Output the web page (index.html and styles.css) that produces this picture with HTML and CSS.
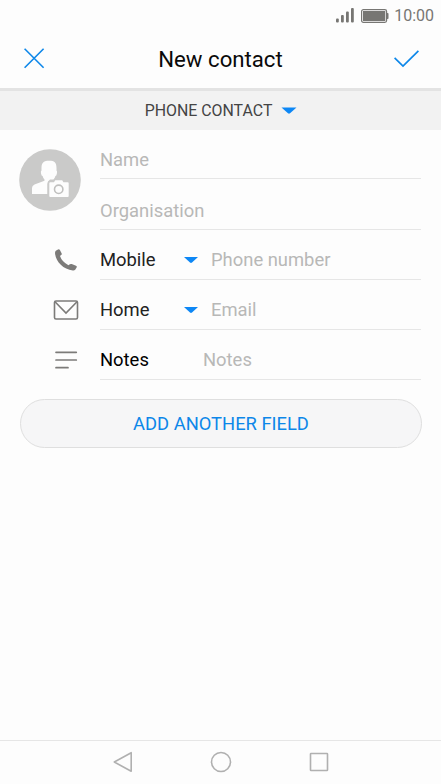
FILE: index.html
```html
<!DOCTYPE html>
<html lang="en">
<head>
<meta charset="utf-8">
<title>New contact</title>
<link rel="stylesheet" href="styles.css">
</head>
<body>
<div class="screen">
  <div class="status">
    <svg class="signal" width="20" height="16" viewBox="0 0 20 16" fill="#777673"><rect x="0" y="10.500" width="2.800" height="4" rx="1"/><rect x="5" y="7" width="2.800" height="7.500" rx="1"/><rect x="10" y="3.500" width="2.800" height="11" rx="1"/><rect x="15" y="0" width="2.800" height="14.500" rx="1"/></svg>
    <svg class="battery" width="28" height="14" viewBox="0 0 28 14"><rect x=".6" y=".6" width="25" height="12.8" rx="1.8" fill="none" stroke="#777673" stroke-width="1.2"/><rect x="2" y="2" width="22.3" height="10" fill="#777673"/><rect x="25.7" y="4" width="1.8" height="6" rx=".7" fill="#777673"/></svg>
    <span class="clock">10:00</span>
  </div>
  <header class="header">
    <svg width="22" height="22" viewBox="0 0 22 22"><path d="M1.600 .8 20.600 19.800M20.600 .8 1.600 19.800" stroke="#0d87e9" stroke-width="1.6" fill="none"/></svg>
    <h1 class="title">New contact</h1>
    <svg width="26" height="18" viewBox="0 0 26 18"><path d="M.6 7.800 9 16 24.400 .8" stroke="#0d87e9" stroke-width="1.7" fill="none"/></svg>
  </header>
  <div class="account">
    <span class="account-name">PHONE CONTACT</span>
    <svg width="16" height="8" viewBox="0 0 16 8"><path d="M.5 .5h15L9 6.300q-1 .7-2 0z" fill="#0d87f5"/></svg>
  </div>
  <main class="form">
    <div class="identity">
      <svg class="avatar" width="62" height="62" viewBox="0 0 62 62">
        <circle cx="31" cy="31" r="30.8" fill="#cacac9"/>
        <path d="M22.500 19C22.500 13.500 25 11.800 30.200 11.800S37.500 13.500 37.500 19V21.500Q38.400 22 37.900 24.500T36.400 27Q35.700 29.500 34.500 30.500H31Q28.300 32 28.300 35V45H13V39Q13 36.500 15.500 35.500L25.500 31.800V30.500Q24.200 29.500 23.600 27 22.500 27 22 24.500T22.500 21.500z" fill="#fdfdfd"/>
        <path d="M31 33.300h4l1.200-2h7l1.200 2h4.300q1 0 1 1v12.700q0 1-1 1H31.300q-1 0-1-1V34.300q0-1 1-1z" fill="#fdfdfd" stroke="#cacac9" stroke-width="3" paint-order="stroke"/>
        <circle cx="39.700" cy="40.300" r="4.200" fill="none" stroke="#c0c0bf" stroke-width="1.600"/>
      </svg>
      <div class="lines">
        <div class="line name"><span class="hint">Name</span></div>
        <div class="line"><span class="hint">Organisation</span></div>
      </div>
    </div>
    <div class="field">
      <svg class="icon" width="26" height="26" viewBox="0 0 26 26"><path d="M2.800 3.800 5 2.400q1.200-.6 1.900.5l1.700 3.300q.5 1.300-.5 1.900L7 9q1.900 5.800 8.500 9.200l1.300-.9q.9-.6 1.900-.3l4.300 1.800q1.300.7.6 1.700l-1.400 2.200q-.8 1-2.300.8C10 22.300 2.600 14.500 2 6q0-1.400.8-2.200z" fill="#7c7b79"/></svg>
      <div class="line"><span class="label">Mobile</span><svg class="caret" width="14" height="8" viewBox="0 0 14 8"><path d="M0 1h14L8 6.600q-1 .7-2 0z" fill="#0d87f5"/></svg><span class="hint">Phone number</span></div>
    </div>
    <div class="field">
      <svg class="icon" width="26" height="26" viewBox="0 0 26 26" fill="none" stroke="#7c7b79" stroke-width="1.600"><rect x="1.500" y="4" width="23" height="18" rx="1.500"/><path d="M2 4.800 13 16 24 4.800"/></svg>
      <div class="line"><span class="label">Home</span><svg class="caret" width="14" height="8" viewBox="0 0 14 8"><path d="M0 1h14L8 6.600q-1 .7-2 0z" fill="#0d87f5"/></svg><span class="hint">Email</span></div>
    </div>
    <div class="field">
      <svg class="icon" width="26" height="26" viewBox="0 0 26 26" fill="none" stroke="#7c7b79" stroke-width="1.700" stroke-linecap="round"><path d="M3 5.300H23.300M3 13H23.300M3 20.700H15"/></svg>
      <div class="line"><span class="label notes">Notes</span><span class="hint">Notes</span></div>
    </div>
    <button class="add">ADD ANOTHER FIELD</button>
  </main>
  <nav class="nav">
    <svg width="22" height="22" viewBox="0 0 22 22"><path d="M19.200 1.700V20.300L2.300 11z"/></svg>
    <svg width="22" height="22" viewBox="0 0 22 22"><circle cx="11" cy="11" r="9.500"/></svg>
    <svg width="22" height="22" viewBox="0 0 22 22"><rect x="2.500" y="2.500" width="17" height="17" rx=".5"/></svg>
  </nav>
</div>
</body>
</html>
```
FILE: styles.css
```css
* {
  box-sizing: border-box;
}

body {
  margin: 0;
  background: #fdfdfd;
  font-family: Roboto, sans-serif;
}

svg {
  display: block;
  flex: none;
}

.screen {
  display: flex;
  flex-direction: column;
  height: 784px;
  overflow: hidden;
}

.status {
  display: flex;
  align-items: center;
  justify-content: flex-end;
  height: 30px;
  padding: 1px 7px 0 0;
}

.battery {
  margin: 0 5px 0 5px;
}

.clock {
  font-size: 16px;
  line-height: 30px;
  color: #777673;
}

.header {
  display: flex;
  align-items: center;
  justify-content: space-between;
  height: 58px;
  padding: 0 21px 1px 23px;
}

.title {
  margin: 1px 0 0 2px;
  font-size: 22.200px;
  font-weight: 400;
  line-height: 28px;
  color: #0a0a0a;
}

.account {
  display: flex;
  align-items: center;
  justify-content: center;
  gap: 9px;
  height: 42px;
  padding-left: 1px;
  border-top: 3px solid #e3e3e3;
  background: #f2f2f2;
}

.account-name {
  font-size: 15.900px;
  color: #444;
}

.form {
  flex: 1;
  padding: 0 20px;
}

.identity {
  display: flex;
  gap: 19px;
  margin-left: -1px;
}

.avatar {
  margin-top: 19px;
}

.lines {
  flex: 1;
}

.line {
  display: flex;
  flex: 1;
  align-items: center;
  height: 50px;
  padding-top: 10px;
  border-bottom: 1px solid #e6e6e6;
  font-size: 18.400px;
  line-height: 24px;
}

.identity .line {
  height: 51px;
  padding-top: 14px;
}

.identity .name {
  height: 49px;
  padding-top: 12px;
}

.field {
  display: flex;
  align-items: center;
  height: 50px;
  padding-left: 33px;
}

.icon {
  margin: 9px 21px 0 0;
}

.label {
  width: 84px;
  color: #222;
}

.notes {
  width: 103px;
  color: #000;
}

.caret {
  margin-right: 13px;
}

.hint {
  color: #b8b8b7;
}

.add {
  display: block;
  width: 402px;
  height: 49px;
  margin: 19px 0 0;
  padding: 0;
  border: 1px solid #dfdfdf;
  border-radius: 25px;
  background: #f6f6f7;
  font: 18.350px/47px Roboto, sans-serif;
  color: #0d87e9;
}

.nav {
  display: flex;
  align-items: center;
  justify-content: center;
  gap: 76px;
  height: 44px;
  padding: 0 0 1px;
  border-top: 1px solid #e6e6e6;
}

.nav svg {
  fill: none;
  stroke: #b0b0b0;
  stroke-width: 1.600;
  stroke-linejoin: round;
}
```
